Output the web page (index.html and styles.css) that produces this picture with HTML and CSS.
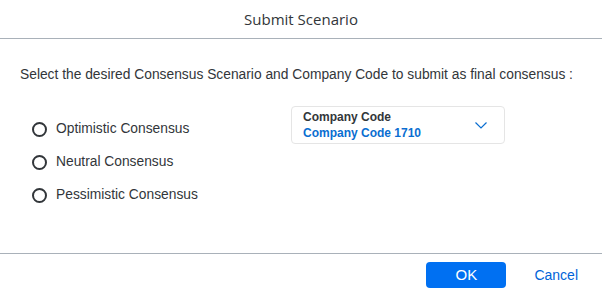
FILE: index.html
```html
<!DOCTYPE html>
<html lang="en">

<head>
    <meta charset="UTF-8">
    <meta name="viewport" content="width=device-width, initial-scale=1.0">
    <title>Submit Scenario</title>
    <link rel="stylesheet" href="styles.css">
</head>

<body>
    <div class="dialog">
        <header class="dialog-header">
            <h1>Submit Scenario</h1>
        </header>

        <div class="dialog-content">
            <p class="intro">Select the desired Consensus Scenario and Company Code to submit as final consensus :</p>

            <div class="choices">
                <div class="radio-group">
                    <label class="radio"><span class="radio-dot"></span>Optimistic Consensus</label>
                    <label class="radio"><span class="radio-dot"></span>Neutral Consensus</label>
                    <label class="radio"><span class="radio-dot"></span>Pessimistic Consensus</label>
                </div>

                <div class="select-box">
                    <div class="select-text">
                        <span class="select-label">Company Code</span>
                        <span class="select-value">Company Code 1710</span>
                    </div>
                    <svg class="chevron" width="12" height="7" viewBox="0 0 12 7">
                        <path d="M0.5 0.5 L6 6 L11.5 0.5" fill="none" stroke="#0a6ed1" stroke-width="1.2"/>
                    </svg>
                </div>
            </div>
        </div>

        <footer class="dialog-footer">
            <button class="btn-ok">OK</button>
            <button class="btn-cancel">Cancel</button>
        </footer>
    </div>
</body>

</html>
```

FILE: styles.css
```css
body {
    margin: 0;
    padding: 0;
    background-color: #fff;
    font-family: 'Liberation Sans', Arial, sans-serif;
    color: #32363a;
}

.dialog {
    width: 602px;
    height: 293px;
    display: flex;
    flex-direction: column;
}

.dialog-header {
    height: 39px;
    border-bottom: 1px solid #a9b1b9;
    display: flex;
    align-items: center;
    justify-content: center;
    box-sizing: border-box;
}

.dialog-header h1 {
    margin: 0;
    font-family: 'Open Sans', sans-serif;
    font-weight: 400;
    font-size: 15px;
    color: #32363a;
}

.dialog-content {
    flex: 1;
    padding: 0 20px;
}

.intro {
    margin: 28px 0 0;
    font-size: 13.8px;
    line-height: 16px;
}

.choices {
    display: flex;
    margin-top: 23px;
}

.radio-group {
    display: flex;
    flex-direction: column;
    gap: 15px;
    padding: 14px 0 0 12px;
    width: 259px;
}

.radio {
    display: flex;
    align-items: center;
    font-size: 13.8px;
    line-height: 18px;
}

.radio-dot {
    width: 11px;
    height: 11px;
    border: 2px solid #32363a;
    border-radius: 50%;
    margin-right: 9px;
}

.select-box {
    width: 214px;
    height: 38px;
    box-sizing: border-box;
    border: 1px solid #e5e5e5;
    border-radius: 4px;
    display: flex;
    align-items: center;
    justify-content: space-between;
    padding: 0 17px 0 11px;
}

.select-text {
    display: flex;
    flex-direction: column;
    font-size: 12px;
    font-weight: 700;
    line-height: 16px;
}

.select-label {
    color: #32363a;
}

.select-value {
    color: #0a6ed1;
}

.dialog-footer {
    height: 39px;
    border-top: 1px solid #a9b1b9;
    display: flex;
    align-items: center;
    justify-content: flex-end;
    padding-right: 24px;
}

button {
    font-family: 'Liberation Sans', Arial, sans-serif;
    font-size: 14px;
    border: none;
    cursor: pointer;
}

.btn-ok {
    width: 80px;
    height: 26px;
    background-color: #0070f2;
    color: #fff;
    border-radius: 4px;
    font-size: 15px;
    margin-right: 28px;
    margin-top: 2px;
}

.btn-cancel {
    background: none;
    color: #0064d9;
    padding: 0;
    margin-top: 2px;
}
```
